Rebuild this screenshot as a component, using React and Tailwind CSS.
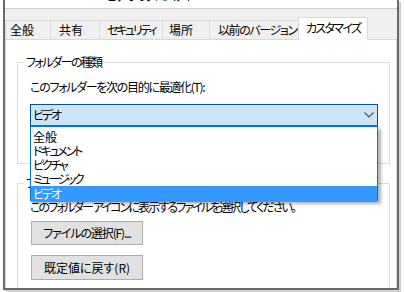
import React from 'react';

const tabs = [
    { label: '全般', className: 'w-[45px] pl-[4px]' },
    { label: '共有', className: 'w-[49px] pl-[8px]' },
    { label: 'セキュリティ', className: 'w-[63px] pl-[7px] tracking-[-2.3px]' },
    { label: '場所', className: 'w-[47px] pl-[6px]' },
    { label: '以前のバージョン', className: 'w-[89px] pl-[8px] tracking-[-1.4px]' },
];

const options = [
    { label: '全般', className: '' },
    { label: 'ドキュメント', className: 'tracking-[-2.2px]' },
    { label: 'ピクチャ', className: 'tracking-[-2.2px]' },
    { label: 'ミュージック', className: 'tracking-[-2.4px]' },
];

const Chevron = () => (
    <svg width="10" height="6" viewBox="0 0 10 6" fill="none">
        <polyline points="0.5,0.5 5,5 9.5,0.5" stroke="#555" strokeWidth="1.2" />
    </svg>
);

const App = () => {
    return (
        <div className="w-[404px] h-[292px] bg-white overflow-hidden pl-[3px] font-['Noto_Sans_CJK_JP',sans-serif] [font-feature-settings:'palt'] text-[12px] leading-[16px] text-black">
            <div className="w-[396px] h-[290px] border-x-2 border-b-2 border-[#6b6b6b] shadow-[2px_2px_1px_rgba(0,0,0,0.18)] bg-[#f0f0f0] flex flex-col overflow-hidden">
                {/* cut-off title */}
                <div className="h-[9px] shrink-0 bg-white border-b border-[#cfcfcf] overflow-hidden">
                    <div className="ml-[101px] -mt-[12px] whitespace-nowrap tracking-[-1.5px]">ビデオのプロパティ</div>
                </div>

                {/* tabs */}
                <div className="h-[30px] shrink-0 flex items-end">
                    {tabs.map((tab) => (
                        <div
                            key={tab.label}
                            className={`${tab.className} h-[19px] shrink-0 border-t border-l border-[#d9d9d9] flex items-center whitespace-nowrap overflow-hidden`}
                        >
                            {tab.label}
                        </div>
                    ))}
                    <div className="relative z-10 w-[70px] h-[23px] -mb-px shrink-0 bg-white border-t border-x border-[#d9d9d9] flex items-center pl-[7px] pb-[2px] whitespace-nowrap tracking-[-1.7px]">
                        カスタマイズ
                    </div>
                </div>

                {/* tab pane */}
                <div className="flex-1 bg-white border-t border-x border-[#d9d9d9] pl-[11px] pt-[22px] overflow-hidden">
                    <div className="relative w-[373px] h-[102px] border border-[#dcdcdc]">
                        <span className="absolute -top-[9px] left-[6px] px-[2px] bg-white whitespace-nowrap tracking-[-1.7px]">フォルダーの種類</span>
                        <div className="pl-[12px] pt-[16px]">
                            <div className="whitespace-nowrap tracking-[-1.3px]">このフォルダーを次の目的に最適化(T):</div>
                            <div className="relative z-20 mt-[9px] w-[348px]">
                                <div className="h-[22px] border border-[#005499] border-b-[#0078d7] bg-[#cce4f7] flex items-center justify-between pl-[2px] pr-[3px]">
                                    <span className="tracking-[-2.2px]">ビデオ</span>
                                    <Chevron />
                                </div>
                                <div className="absolute left-0 top-full w-[348px] h-[75px] bg-white border border-[#0078d7] pt-[3px] shadow-[3px_3px_3px_rgba(0,0,0,0.3)] flex flex-col">
                                    {options.map((opt) => (
                                        <div key={opt.label} className={`${opt.className} h-[14px] shrink-0 pl-[2px] flex items-center whitespace-nowrap`}>
                                            {opt.label}
                                        </div>
                                    ))}
                                    <div className="flex-1 bg-[#3399ff] text-white pl-[2px] flex items-center tracking-[-2.2px]">ビデオ</div>
                                </div>
                            </div>
                        </div>
                    </div>

                    <div className="relative mt-[19px] w-[373px] h-[120px] border border-[#dcdcdc]">
                        <span className="absolute -top-[9px] left-[6px] px-[2px] bg-white whitespace-nowrap tracking-[-1.7px]">フォルダー アイコン</span>
                        <div className="pl-[12px] pt-[15px]">
                            <div className="whitespace-nowrap tracking-[-1.9px]">このフォルダー アイコンに表示するファイルを選択してください。</div>
                            <button
                                type="button"
                                className="mt-[6px] ml-[1px] w-[112px] h-[24px] bg-[#e1e1e1] border border-[#adadad] flex items-center justify-center whitespace-nowrap tracking-[-1.1px]"
                            >
                                ファイルの選択(F)...
                            </button>
                            <button
                                type="button"
                                className="mt-[10px] ml-[1px] w-[112px] h-[25px] bg-[#e1e1e1] border border-[#adadad] flex items-center justify-center whitespace-nowrap"
                            >
                                既定値に戻す(R)
                            </button>
                        </div>
                    </div>
                </div>
            </div>
        </div>
    );
};

export default App;
